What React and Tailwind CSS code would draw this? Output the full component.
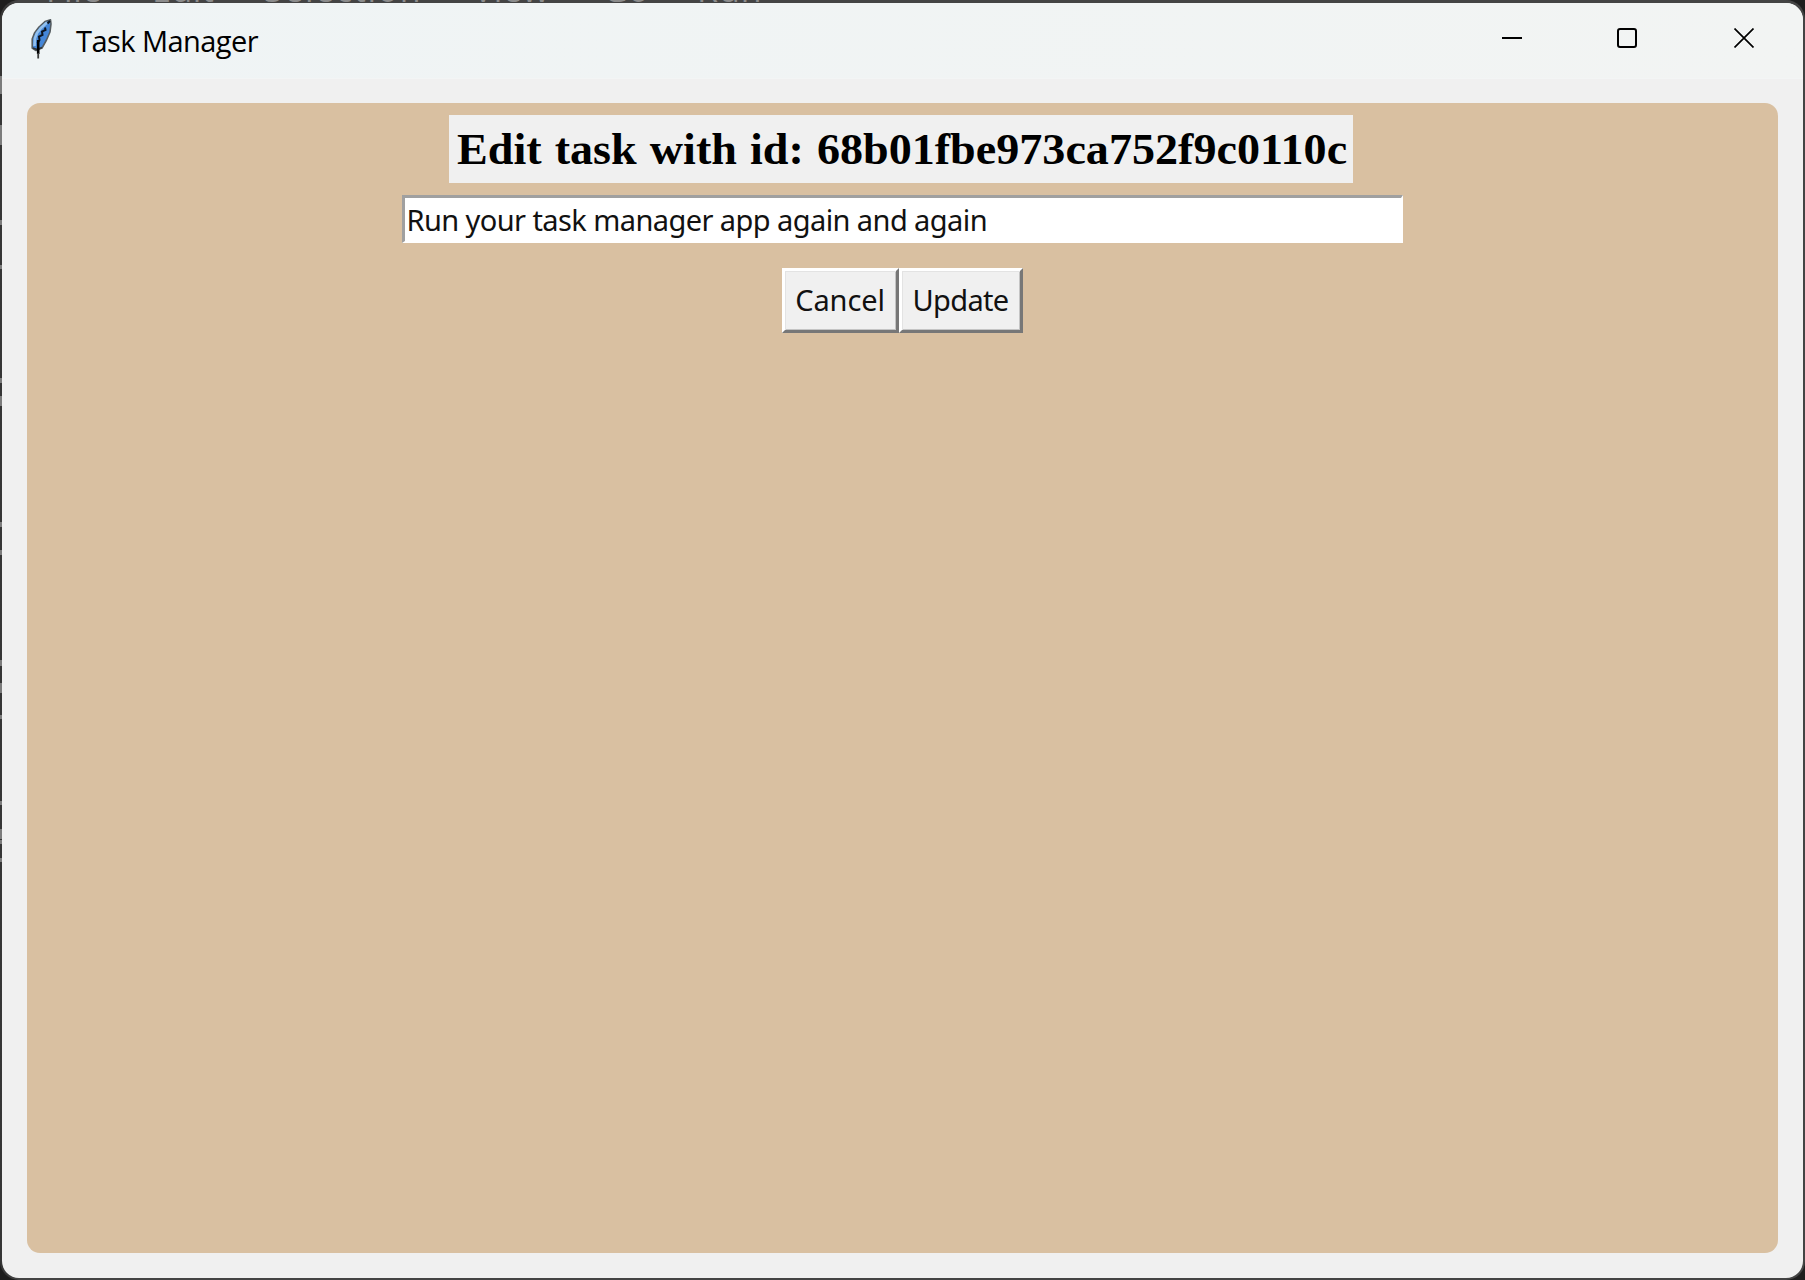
const MENU = [
  { label: "File", cls: "w-[106px]" },
  { label: "Edit", cls: "w-[112px]" },
  { label: "Selection", cls: "w-[209px] tracking-[1.6px]" },
  { label: "View", cls: "w-[130px]" },
  { label: "Go", cls: "w-[94px]" },
  { label: "Run", cls: "w-[90px] tracking-[1px]" },
];

const EDGE_MARKS = [
  "mt-[76px] h-[18px]",
  "mt-[31px] h-[20px]",
  "mt-[75px] h-[5px]",
  "mt-[40px] h-[4px]",
  "mt-[109px] h-[5px]",
  "mt-[13px] h-[10px]",
  "mt-[116px] h-[5px]",
  "mt-[23px] h-[5px]",
  "mt-[105px] h-[6px]",
  "mt-[17px] h-[10px]",
  "mt-[22px] h-[4px]",
  "mt-[82px] h-[4px]",
  "mt-[24px] h-[10px]",
  "mt-[1px] h-[4px]",
  "mt-[14px] h-[4px]",
];

function Feather() {
  return (
    <svg className="h-10 w-6" viewBox="0 0 24 40">
      <path d="M19.500 .8 14 2.500 8 8 3.500 14 1.200 20 1.200 29 5 31.500 11 29 15.500 21 19 13 20 5Z" fill="#4486d8" stroke="#555c60" strokeWidth="1.600" strokeLinejoin="round" />
      <path d="M16 3.500 10 9 6 14 4 19 3.500 27" fill="none" stroke="#92c0ee" strokeWidth="2.600" />
      <path d="M19 2 16.500 4.500M14 8.500 14.500 11 11 12.500 11.500 16 8 17.500 8.500 21 6.500 24" fill="none" stroke="#0c1420" strokeWidth="2" />
      <path d="M2 29 6 30.500 11 28.500" fill="none" stroke="#30363a" strokeWidth="1.500" />
      <path d="M7.200 21V35" stroke="#000" strokeWidth="2.600" />
      <path d="M7.200 34V39.500" stroke="#3a3a3a" strokeWidth="1.800" />
    </svg>
  );
}

function TitleBar() {
  return (
    <header className="flex h-[76px] shrink-0 items-start border-b border-[#f3f5f5] bg-gradient-to-r from-[#eff4f5] to-[#f2f4f3]">
      <div className="ml-[29px] mt-4"><Feather /></div>
      <h1 className="ml-[21px] mt-[18px] whitespace-nowrap font-['Open_Sans','Noto_Sans',sans-serif] text-[29px] leading-10 tracking-[-0.55px] text-black">Task Manager</h1>
      <div className="ml-auto mr-[49px] mt-[25px] flex text-black">
        <button aria-label="Minimize" className="mr-[95px]">
          <svg className="block size-5" viewBox="0 0 20 20"><path d="M0 10h20" stroke="currentColor" strokeWidth="2" /></svg>
        </button>
        <button aria-label="Maximize" className="mr-[97px]">
          <svg className="block size-5" viewBox="0 0 20 20"><rect x="1" y="1" width="18" height="18" rx="2" fill="none" stroke="currentColor" strokeWidth="2" /></svg>
        </button>
        <button aria-label="Close">
          <svg className="block size-5" viewBox="0 0 20 20"><path d="m.5.5 19 19M19.500.5l-19 19" stroke="currentColor" strokeWidth="1.700" /></svg>
        </button>
      </div>
    </header>
  );
}

function RaisedButton({ label, className }) {
  return (
    <button className={`flex h-[65px] items-center justify-center whitespace-nowrap border-3 border-t-white border-l-white border-r-[#777] border-b-[#777] bg-[#f0f0f0] pb-px font-['Noto_Sans',sans-serif] text-[29px] text-[#111] shadow-[inset_1px_1px_0_#e3e3e3,inset_-1px_-1px_0_#c4c4c4] ${className}`}>
      {label}
    </button>
  );
}

export default function App() {
  return (
    <div className="relative h-[1280px] w-[1805px] overflow-hidden bg-[#1e1e1e]">
      <div className="h-[1280px] rounded-[19px] bg-gradient-to-r from-[#353535] via-[#444] via-[1%] to-[#444] px-[2px] pt-[3px] pb-[2px]">
        <div className="absolute left-[46px] -top-[35px] flex font-['Open_Sans',sans-serif] text-[34px] leading-[48px] tracking-[0.5px] text-[#8c8c8c]">
          {MENU.map((m) => <span key={m.label} className={m.cls}>{m.label}</span>)}
        </div>
        <div className="absolute left-0 top-0 flex w-[2px] flex-col">
          {EDGE_MARKS.map((mark, i) => <i key={i} className={`block bg-[#7c7c7c] ${mark}`} />)}
        </div>
        <div className="relative flex h-[1275px] flex-col overflow-hidden rounded-[17px] bg-[#f0f0f0]">
          <TitleBar />
          <main className="mx-[25px] mt-6 flex h-[1150px] flex-col items-center rounded-[13px] bg-[#d9c0a1] pt-3">
            <div className="mr-[3px] flex h-[68px] w-[904px] items-center whitespace-nowrap bg-[#f0f0f0] pl-2 font-['Liberation_Serif',serif] text-[44px] font-bold text-black">
              <span className="block origin-left scale-x-[1.048] pt-px [word-spacing:1.5px]">Edit task with id: 68b01fbe973ca752f9c0110c</span>
            </div>
            <input
              className="mr-px mt-[12px] h-[48px] w-[1001px] border-t-3 border-r-2 border-b-2 border-l-3 border-t-[#a0a0a0] border-r-white border-b-white border-l-[#a0a0a0] bg-white pl-[2px] font-['Noto_Sans',sans-serif] text-[29px] tracking-[-0.58px] text-[#111] outline-none"
              defaultValue="Run your task manager app again and again"
            />
            <div className="mt-[25px] flex">
              <RaisedButton label="Cancel" className="w-[117px] pr-px tracking-[-0.1px]" />
              <RaisedButton label="Update" className="w-[124px] pr-px tracking-[-0.7px]" />
            </div>
          </main>
        </div>
      </div>
    </div>
  );
}
